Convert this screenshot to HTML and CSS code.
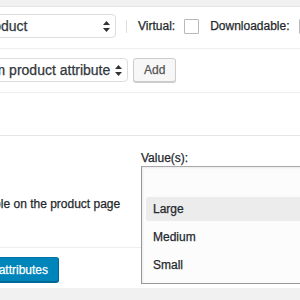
FILE: index.html
```html
<!DOCTYPE html>
<html lang="en">
<head>
    <meta charset="UTF-8">
    <title>Product data - Attributes</title>
    <link rel="stylesheet" href="styles.css">
</head>
<body>
    <div class="topbar"></div>

    <div class="panel">
        <!-- product type row -->
        <div class="toolbar first">
            <div class="select type-select">
                <span>Simple product</span>
                <svg class="arrows" width="7" height="11" viewBox="0 0 7 11"><path d="M3.5 0 L7 4 L0 4 Z M0 7 L7 7 L3.5 11 Z" fill="#333"/></svg>
            </div>
            <span class="sep"></span>
            <label class="opt">Virtual:</label>
            <span class="checkbox"></span>
            <label class="opt">Downloadable:</label>
            <span class="checkbox"></span>
        </div>

        <!-- add attribute row -->
        <div class="toolbar">
            <div class="select attr-select">
                <span>Custom product attribute</span>
                <svg class="arrows" width="7" height="11" viewBox="0 0 7 11"><path d="M3.5 0 L7 4 L0 4 Z M0 7 L7 7 L3.5 11 Z" fill="#333"/></svg>
            </div>
            <button class="btn">Add</button>
        </div>

        <div class="attr-head"></div>

        <div class="attr-body">
            <div class="attr-left">
                <div class="attr-opts">
                    <span class="checkbox small"></span>
                    <span>Visible on the product page</span>
                </div>
                <div class="save-bar">
                    <button class="btn primary">Save attributes</button>
                </div>
            </div>
            <div class="attr-right">
                <div class="values-label">Value(s):</div>
                <div class="listbox">
                    <div class="option selected">Large</div>
                    <div class="option">Medium</div>
                    <div class="option">Small</div>
                </div>
            </div>
        </div>
    </div>

    <div class="bottombar"></div>
</body>
</html>
```

FILE: styles.css
```css
html, body {
    margin: 0;
    padding: 0;
    overflow: hidden;
    background: #fff;
    width: 300px;
    height: 300px;
    font-family: "Liberation Sans", Arial, sans-serif;
    font-size: 12px;
    color: #23282d;
    -webkit-text-stroke: 0.25px;
}

.topbar {
    height: 6px;
    background: #f1f1f1;
    border-bottom: 1px solid #e5e5e5;
}

.panel {
    margin-left: -75px;
    width: 400px;
}

.toolbar {
    display: flex;
    align-items: center;
    padding: 9px 0 10px 0;
    border-bottom: 1px solid #eee;
}

.toolbar.first {
    padding-top: 7px;
}

.select {
    height: 24px;
    box-sizing: border-box;
    border: 1px solid #ddd;
    border-radius: 4px;
    background: #fff;
    display: flex;
    align-items: center;
    justify-content: space-between;
    padding: 0 5px 0 8px;
    font-size: 14px;
    color: #32373c;
    white-space: nowrap;
    overflow: hidden;
}

.type-select { width: 191px; }
.attr-select {
    width: 203px;
    padding-left: 31px;
}

.sep {
    width: 1px;
    height: 13px;
    background: #ddd;
    margin: 0 11px 0 10px;
}

.opt {
    margin-right: 9px;
}

.checkbox {
    width: 15px;
    height: 15px;
    box-sizing: border-box;
    border: 1px solid #b4b9be;
    background: #fff;
    border-radius: 1px;
    margin-right: 11px;
    flex: none;
}

.btn {
    height: 24px;
    margin-left: 5px;
    padding: 0 10px;
    font-family: "Liberation Sans", Arial, sans-serif;
    font-size: 12px;
    color: #555;
    background: #f7f7f7;
    border: 1px solid #ccc;
    border-radius: 3px;
    box-shadow: 0 1px 0 #ccc;
    -webkit-text-stroke: 0.25px;
}

.btn.primary {
    height: 25px;
    margin-left: 0;
    color: #fff;
    background: #0085ba;
    border-color: #0073aa #006799 #006799;
    box-shadow: 0 1px 0 #006799;
}

.attr-head {
    height: 42px;
    border-bottom: 1px solid #e5e5e5;
}

.attr-body {
    display: grid;
    grid-template-columns: 216px 1fr;
}

.attr-left {
    display: flex;
    flex-direction: column;
}

.attr-opts {
    height: 51px;
    padding: 60px 0 0 32px;
    border-bottom: 1px solid #eee;
    display: flex;
    align-items: flex-start;
    line-height: 16px;
}

.attr-opts .checkbox {
    margin-right: 3px;
}

.save-bar {
    padding: 9px 0 6px 32px;
}

.values-label {
    padding-top: 14px;
    line-height: 16px;
}

.listbox {
    height: 118px;
    box-sizing: border-box;
    border: 1px solid #999;
    border-top-color: #aaa;
    box-shadow: inset 1px 1px 2px rgba(0, 0, 0, 0.08);
    background: #fcfcfc;
    padding: 30px 0 0 4px;
}

.option {
    height: 24px;
    line-height: 24px;
    padding-left: 7px;
    margin-bottom: 4px;
}

.option.selected {
    background: #ececec;
    border-radius: 2px;
}

.bottombar {
    height: 20px;
    background: #f1f1f1;
}
```
